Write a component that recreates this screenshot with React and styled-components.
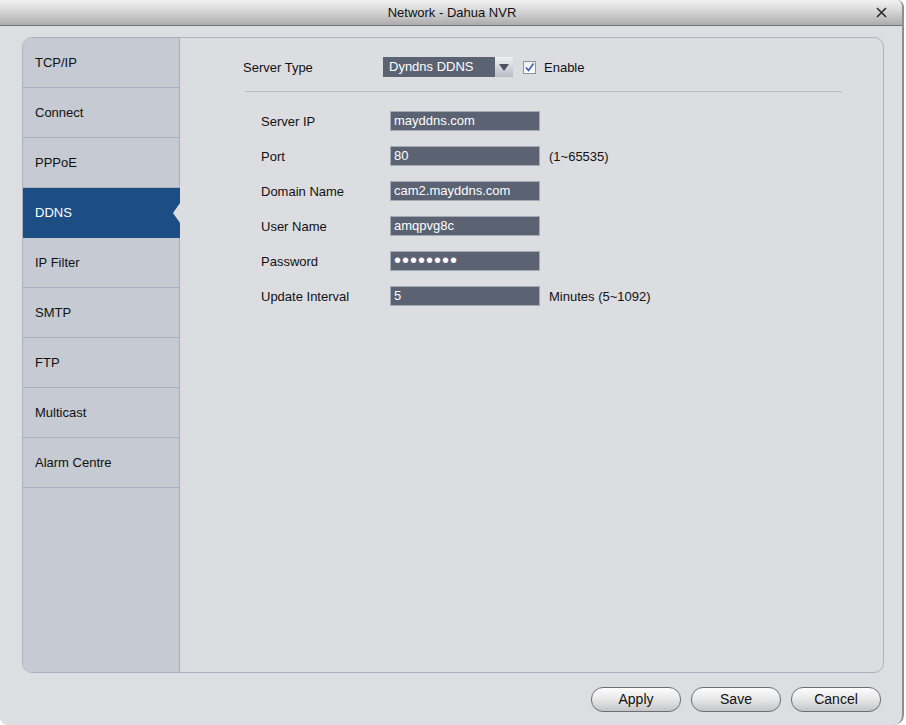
import styled, { createGlobalStyle } from "styled-components"

const GlobalStyle = createGlobalStyle`
    html, body {
        margin: 0;
        padding: 0;
        background: #ffffff;
        font-family: "Liberation Sans", Arial, sans-serif;
    }
    * {
        box-sizing: border-box;
    }
`

const menu = ["TCP/IP", "Connect", "PPPoE", "DDNS", "IP Filter", "SMTP", "FTP", "Multicast", "Alarm Centre"]

const fields = [
    { label: "Server IP", value: "mayddns.com" },
    { label: "Port", value: "80", hint: "(1~65535)" },
    { label: "Domain Name", value: "cam2.mayddns.com" },
    { label: "User Name", value: "amqpvg8c" },
    { label: "Password", value: "password", secret: true },
    { label: "Update Interval", value: "5", hint: "Minutes (5~1092)" },
]

export default function App(){
    return(
        <>
            <GlobalStyle />
            <Window>
                <TitleBar>
                    <Title>Network - Dahua NVR</Title>
                    <Close>
                        <svg width="11" height="11" viewBox="0 0 11 11">
                            <path d="M1 1 L10 10 M10 1 L1 10" stroke="#2b2b2b" strokeWidth="1.6" />
                        </svg>
                    </Close>
                </TitleBar>

                <Body>
                    <Panel>
                        <Sidebar>
                            {menu.map((item) => (
                                <MenuItem key={item} $active={item === "DDNS"}>
                                    {item}
                                    {item === "DDNS" && <Notch />}
                                </MenuItem>
                            ))}
                        </Sidebar>

                        <Content>
                            <TypeRow>
                                <TypeLabel>Server Type</TypeLabel>
                                <Select>
                                    <span>Dyndns DDNS</span>
                                    <Arrow>
                                        <svg width="10" height="7" viewBox="0 0 10 7">
                                            <path d="M0 0 L10 0 L5 7 Z" fill="#4b5262" />
                                        </svg>
                                    </Arrow>
                                </Select>
                                <Check>
                                    <svg width="11" height="11" viewBox="0 0 11 11">
                                        <path d="M2 5.5 L4.5 8.5 L9.5 1.5" stroke="#3a5fae" strokeWidth="1.6" fill="none" />
                                    </svg>
                                </Check>
                                <CheckText>Enable</CheckText>
                            </TypeRow>

                            <Divider />

                            <Fields>
                                {fields.map((f) => (
                                    <FieldRow key={f.label}>
                                        <Label>{f.label}</Label>
                                        {f.secret ? (
                                            <Input type="password" readOnly value={f.value} $secret />
                                        ) : (
                                            <Input type="text" readOnly value={f.value} />
                                        )}
                                        {f.hint && <Hint>{f.hint}</Hint>}
                                    </FieldRow>
                                ))}
                            </Fields>
                        </Content>
                    </Panel>

                    <Footer>
                        <Pill>Apply</Pill>
                        <Pill>Save</Pill>
                        <Pill>Cancel</Pill>
                    </Footer>
                </Body>
            </Window>
        </>
    )
}

const Window = styled.div`
    width: 904px;
    height: 725px;
    display: flex;
    flex-direction: column;
    background: #dcdee2;
    border-right: 2px solid #8e8f92;
    border-radius: 0 7px 10px 8px;
    overflow: hidden;
`

const TitleBar = styled.div`
    position: relative;
    height: 26px;
    flex-shrink: 0;
    display: flex;
    align-items: center;
    justify-content: center;
    background: linear-gradient(#f2f2f2, #d6d6d6 45%, #acacac);
    border-bottom: 1px solid #6f7070;
`

const Title = styled.div`
    font-size: 13px;
    color: #111111;
    padding-left: 2px;
`

const Close = styled.div`
    position: absolute;
    right: 15px;
    top: 7px;
    width: 11px;
    height: 11px;
    display: flex;
`

const Body = styled.div`
    flex: 1;
    display: flex;
    flex-direction: column;
    padding: 11px 18px 0 22px;
`

const Panel = styled.div`
    height: 636px;
    display: flex;
    border: 1px solid #aab2c2;
    border-radius: 10px;
    overflow: hidden;
    background: #dcdde1;
`

const Sidebar = styled.div`
    width: 157px;
    flex-shrink: 0;
    background: #c5cad3;
    border-right: 1px solid #a8b0bf;
`

const MenuItem = styled.div`
    position: relative;
    height: 50px;
    display: flex;
    align-items: center;
    padding-left: 12px;
    padding-bottom: 1px;
    font-size: 13px;
    color: ${(p) => (p.$active ? "#ffffff" : "#111111")};
    background: ${(p) => (p.$active ? "#1c4e84" : "transparent")};
    border-bottom: 1px solid ${(p) => (p.$active ? "#1c4e84" : "#a9b1c0")};
    margin-right: ${(p) => (p.$active ? "-1px" : "0")};
`

const Notch = styled.div`
    position: absolute;
    right: 0;
    top: 50%;
    margin-top: -10px;
    width: 0;
    height: 0;
    border-top: 10px solid transparent;
    border-bottom: 10px solid transparent;
    border-right: 7px solid #dcdde1;
`

const Content = styled.div`
    flex: 1;
    padding: 19px 0 0 63px;
`

const TypeRow = styled.div`
    display: flex;
    align-items: center;
    height: 20px;
`

const TypeLabel = styled.div`
    width: 140px;
    font-size: 13px;
    color: #111111;
`

const Select = styled.div`
    width: 130px;
    height: 20px;
    display: flex;
    align-items: center;
    justify-content: space-between;
    background: #5b6272;
    color: #ffffff;
    font-size: 13px;
    padding-left: 6px;

    span{
        padding-bottom: 1px;
    }
`

const Arrow = styled.div`
    width: 18px;
    height: 20px;
    display: flex;
    align-items: center;
    justify-content: center;
    background: linear-gradient(#f0f0f0, #b9bcc2);
`

const Check = styled.div`
    width: 13px;
    height: 13px;
    margin-left: 10px;
    display: flex;
    align-items: center;
    justify-content: center;
    background: linear-gradient(#eeeff2, #ffffff);
    border: 1px solid #8d95a4;
`

const CheckText = styled.div`
    margin-left: 8px;
    font-size: 13px;
    color: #111111;
`

const Divider = styled.div`
    width: 597px;
    height: 1px;
    margin: 14px 0 0 2px;
    background: #b8bbc2;
`

const Fields = styled.div`
    display: flex;
    flex-direction: column;
    gap: 15px;
    margin: 19px 0 0 18px;
`

const FieldRow = styled.div`
    display: flex;
    align-items: center;
    height: 20px;
`

const Label = styled.div`
    width: 129px;
    font-size: 13px;
    color: #111111;
`

const Input = styled.input`
    width: 150px;
    height: 20px;
    margin: 0;
    padding: 0 0 1px 3px;
    border: 1px solid #a4aab6;
    background: #5b6272;
    color: #ffffff;
    font-family: "Liberation Sans", Arial, sans-serif;
    font-size: ${(p) => (p.$secret ? "20px" : "13px")};
    letter-spacing: ${(p) => (p.$secret ? "1px" : "0")};
    outline: none;
`

const Hint = styled.div`
    margin-left: 9px;
    font-size: 13px;
    color: #111111;
`

const Footer = styled.div`
    display: flex;
    justify-content: flex-end;
    gap: 10px;
    padding: 14px 3px 0 0;
`

const Pill = styled.button`
    width: 90px;
    height: 25px;
    border: 1px solid #6c6e72;
    border-radius: 12px;
    background: linear-gradient(#fdfdfd, #e6e6e6 50%, #c4c5c8);
    font-family: "Liberation Sans", Arial, sans-serif;
    font-size: 14px;
    color: #111111;
    padding: 0 0 1px 0;
    cursor: pointer;
`
